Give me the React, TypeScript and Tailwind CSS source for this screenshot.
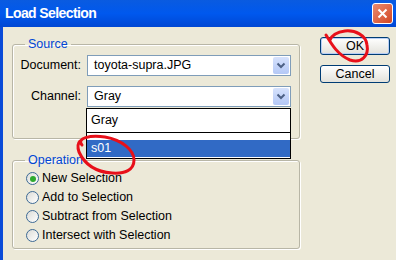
import React from "react";

const font = { fontFamily: '"Liberation Sans", Arial, sans-serif' };

const Combo = ({ value }: { value: string }) => (
  <div className="flex h-[21px] w-[204px] items-center border border-[#7F9DB9] bg-white p-[1px]">
    <span className="flex-1 pl-[5px] text-[12.5px] text-black">{value}</span>
    <div className="flex h-full w-[16px] items-center justify-center rounded-[2px] bg-gradient-to-b from-[#D6E2FC] to-[#B4C8F6]">
      <svg width="10" height="7" viewBox="0 0 10 7">
        <path d="M1.5 1.5 L5 5 L8.5 1.5" fill="none" stroke="#4D6185" strokeWidth="2" />
      </svg>
    </div>
  </div>
);

const Radio = ({ label, checked }: { label: string; checked?: boolean }) => (
  <div className="flex h-[19px] items-center gap-[3px]">
    <div className="flex h-[13px] w-[13px] items-center justify-center rounded-full border border-[#3D6A95] bg-gradient-to-br from-[#DCDCD7] to-white">
      {checked && <div className="h-[6px] w-[6px] rounded-full bg-[#2EAA2E]" />}
    </div>
    <span className="text-[12.5px] text-black">{label}</span>
  </div>
);

const Group = ({
  title,
  legendClass,
  className,
  children,
}: {
  title: string;
  legendClass: string;
  className: string;
  children: React.ReactNode;
}) => (
  <fieldset className={`rounded-[3px] border border-[#B8B6A6] shadow-[inset_1px_1px_0_#fff,1px_1px_0_#fff] ${className}`}>
    <legend className={`px-[3px] text-[12.5px] leading-[15px] text-[#0046D5] ${legendClass}`}>{title}</legend>
    {children}
  </fieldset>
);

const Button = ({ label, primary }: { label: string; primary?: boolean }) => (
  <div
    className={`flex h-[18px] w-[70px] items-center justify-center rounded-[3px] border border-[#003C74] bg-gradient-to-b from-white to-[#E3E2DB] text-[12.5px] text-black ${
      primary ? "shadow-[inset_0_0_0_1px_#B7CEF6]" : ""
    }`}
  >
    {label}
  </div>
);

export default function App() {
  return (
    <div className="relative h-[260px] w-[396px] overflow-hidden bg-[#ECE9D8]" style={font}>
      <div className="flex h-[27px] items-center justify-between bg-gradient-to-b from-[#0A5BE0] via-[#0058EE] to-[#0047D3] pl-[5px] pr-[3px]">
        <span className="text-[14px] font-bold tracking-[-0.6px] text-white">Load Selection</span>
        <div className="flex h-[21px] w-[21px] items-center justify-center rounded-[3px] border border-white bg-gradient-to-br from-[#E98A6F] to-[#D2441F]">
          <svg width="11" height="11" viewBox="0 0 11 11">
            <path d="M1.5 1.5 L9.5 9.5 M9.5 1.5 L1.5 9.5" stroke="#fff" strokeWidth="2" />
          </svg>
        </div>
      </div>

      <div className="flex h-[233px] border-l-[3px] border-[#0A4BD8]">
        <div className="flex w-[297px] flex-col pl-[9px] pt-[10px]">
          <Group title="Source" legendClass="ml-[5px]" className="flex h-[102px] flex-col gap-[10px] pl-[7px] pt-[3px]">
            <div className="flex items-center gap-[6px]">
              <span className="w-[61px] text-right text-[12.5px] text-black">Document:</span>
              <Combo value="toyota-supra.JPG" />
            </div>
            <div className="flex items-center gap-[6px]">
              <span className="w-[61px] text-right text-[12.5px] text-black">Channel:</span>
              <Combo value="Gray" />
            </div>
          </Group>
          <Group title="Operation" legendClass="-ml-[1px]" className="mt-[14px] flex h-[96px] flex-col pl-[13px] pt-[1px]">
            <Radio label="New Selection" checked />
            <Radio label="Add to Selection" />
            <Radio label="Subtract from Selection" />
            <Radio label="Intersect with Selection" />
          </Group>
        </div>
        <div className="flex flex-col gap-[10px] pl-[20px] pt-[10px]">
          <Button label="OK" primary />
          <Button label="Cancel" />
        </div>
      </div>

      <div className="absolute left-[86px] top-[108px] flex h-[51px] w-[205px] flex-col border border-black bg-white text-[12.5px]">
        <div className="flex h-[24px] items-center border-b border-black pl-[4px] text-black">Gray</div>
        <div className="h-[7px]" />
        <div className="flex h-[17px] items-center bg-[#316AC5] pl-[4px] text-white">s01</div>
      </div>

      <svg className="pointer-events-none absolute left-0 top-0" width="396" height="260">
        <path
          d="M326 35 C332 45, 338 55, 350 60 C362 64, 369 55, 367 45 C366 35, 355 30, 345 31 C338 32, 332 35, 330 40"
          fill="none"
          stroke="#E8101A"
          strokeWidth="3"
          strokeLinecap="round"
        />
        <path
          d="M82 145 C76 138, 90 135, 105 137 C122 140, 134 150, 134 160 C134 170, 125 174, 112 173 C97 172, 85 165, 79 152 C77 146, 78 143, 80 141"
          fill="none"
          stroke="#E8101A"
          strokeWidth="3"
          strokeLinecap="round"
        />
      </svg>
    </div>
  );
}
